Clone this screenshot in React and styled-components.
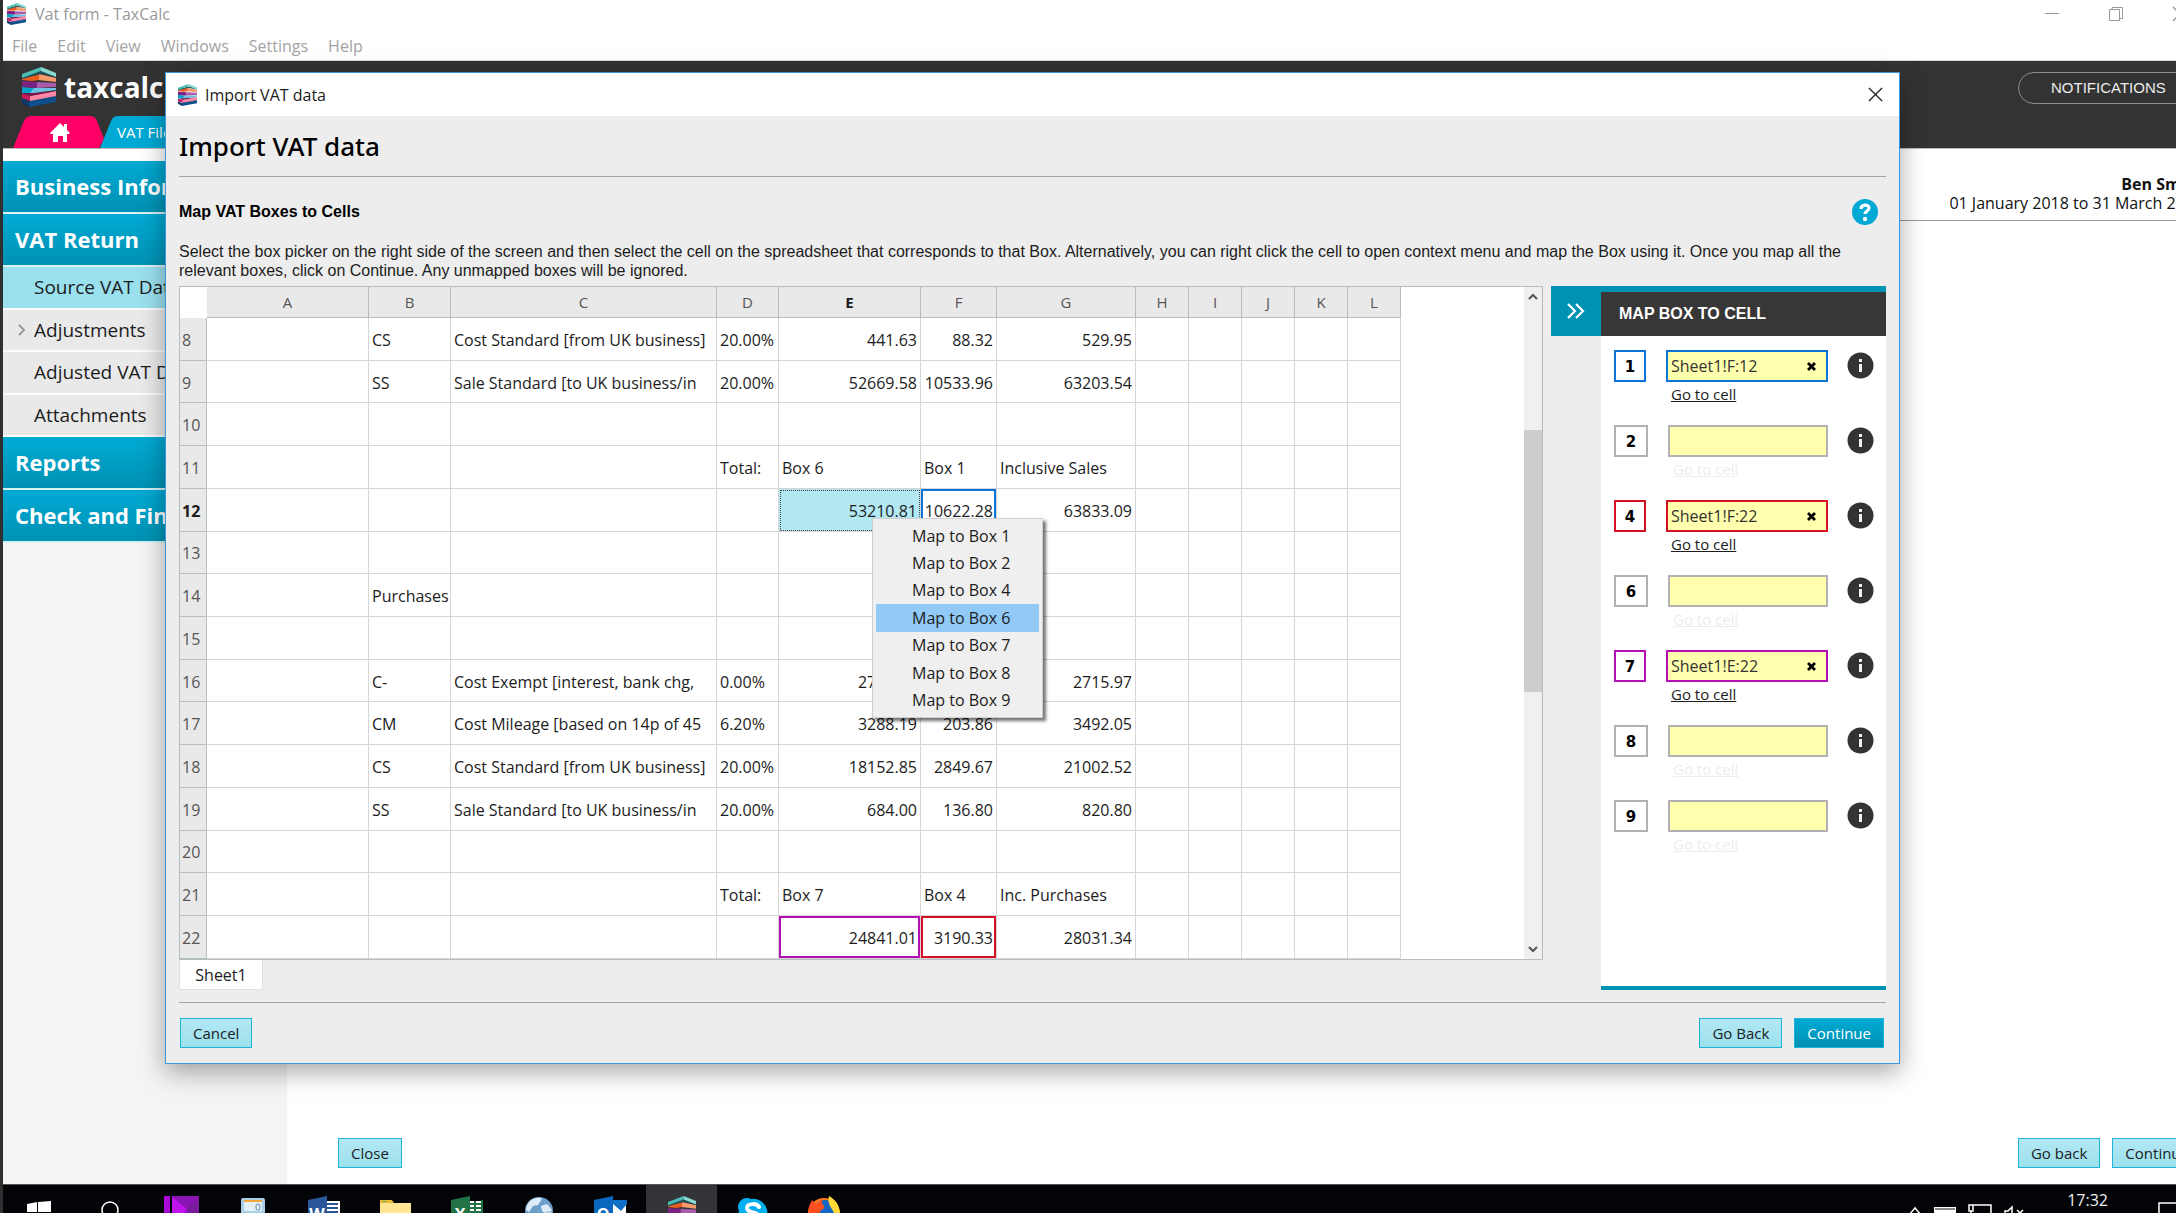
import React from 'react';
import styled, { createGlobalStyle, css } from 'styled-components';

const ui = '"Open Sans", "Noto Sans", sans-serif';
const arial = '"Liberation Sans", Arial, sans-serif';

const GlobalStyle = createGlobalStyle`
  *, *::before, *::after { box-sizing: border-box; }
  body { margin: 0; background: #2f2f2f; color: #1c1c1c; font: 16px/20px ${ui}; overflow: hidden; }
  button, input { font: inherit; color: inherit; margin: 0; }
  h1, h2, p, ul { margin: 0; padding: 0; }
  svg { display: block; flex: none; }
`;

const Desktop = styled.div`
  position: relative;
  height: 100vh;
  padding-left: 3px;
  display: flex;
  flex-direction: column;
  overflow: hidden;
`;

/* Main application window: runs past the right edge of the screen */
const Window = styled.div`
  flex: 1;
  min-height: 0;
  width: calc(100% + 40px);
  display: flex;
  flex-direction: column;
  background: #fff;
`;

const TitleBar = styled.header`
  height: 28px;
  display: flex;
  align-items: center;
  gap: 9px;
  padding: 0 28px 0 4px;
  color: #999;
`;

const WindowButtons = styled.div`
  margin-left: auto;
  display: flex;
  gap: 48px;
`;

const IconButton = styled.button`
  flex: none;
  display: flex;
  align-items: center;
  justify-content: center;
  padding: 0;
  border: 0;
  background: none;
  color: ${p => p.$color || '#999'};
`;

const MenuBar = styled.nav`
  height: 33px;
  display: flex;
  align-items: center;
  gap: 20px;
  padding: 4px 9px 0;
  border-bottom: 1px solid #d5dbd8;
`;

const MenuButton = styled.button`
  padding: 0;
  border: 0;
  background: none;
  color: #a3a3a3;
`;

const Brand = styled.div`
  height: 88px;
  display: flex;
  justify-content: space-between;
  background: #333;
  border-bottom: 1px solid #bbb;
`;

const BrandLeft = styled.div`
  display: flex;
  flex-direction: column;
  justify-content: space-between;
`;

const Logo = styled.div`
  display: flex;
  align-items: center;
  gap: 8px;
  height: 52px;
  padding-left: 19px;
  color: #fff;
  font: 700 28px/36px ${ui};
`;

const Tabs = styled.nav`
  display: flex;
  padding-left: 10px;
`;

const Tab = styled.button`
  position: relative;
  width: ${p => p.$width};
  height: 32px;
  margin-right: -5px;
  padding: 0 17px;
  border: 0;
  background: none;
  color: #fff;
  font-size: 15px;
  text-align: left;
  & > svg:first-child { position: absolute; inset: 0; }
  & > span { position: relative; }
`;

const HomeIcon = styled.svg`
  position: relative;
  margin: 0 18px 0 auto;
`;

const Notifications = styled.button`
  align-self: flex-start;
  height: 32px;
  min-width: 182px;
  margin: 11px 16px 0 0;
  padding: 0 32px;
  border: 1px solid #8c8c8c;
  border-radius: 16px;
  background: #333;
  color: #ececec;
  font: 15px/20px ${arial};
  text-align: left;
`;

const Workspace = styled.div`
  flex: 1;
  min-height: 0;
  display: flex;
`;

const Sidebar = styled.nav`
  width: 284px;
  padding-top: 12px;
  background: linear-gradient(#fff 12px, #f4f4f4 12px);
`;

const Section = styled.button`
  display: block;
  width: 100%;
  height: 53px;
  padding: 0 12px 2px;
  border: 0;
  border-bottom: 2px solid #d8f1f7;
  background: linear-gradient(#00aad4, #0091b3);
  color: #fff;
  font-weight: 700;
  font-size: 22px;
  text-align: left;
`;

const SubList = styled.ul`
  height: 170px;
  display: flex;
  flex-direction: column;
  list-style: none;
`;

const SubItem = styled.li`
  flex: 1;
  display: flex;
  align-items: center;
  gap: 8px;
  padding-left: 15px;
  border-bottom: 2px solid #fbfbfb;
  background: ${p => (p.$current ? '#9be0ee' : '#e9e9e9')};
  font-size: 19px;
  & > a { color: #1c1c1c; text-decoration: none; }
`;

const Content = styled.main`
  flex: 1;
  display: flex;
  flex-direction: column;
  justify-content: space-between;
`;

const Client = styled.div`
  padding: 26px 13px 7px;
  border-bottom: 1px solid #999;
  color: #111;
  text-align: right;
  line-height: 19px;
`;

const ContentActions = styled.div`
  display: flex;
  gap: 12px;
  padding: 0 14px 16px 51px;
`;

const Button = styled.button`
  height: 30px;
  padding: 0 12px;
  border: 1px solid #1cb4d8;
  background: ${p => (p.$primary ? 'linear-gradient(#00aad4, #0091b3)' : 'linear-gradient(#b3e8f3, #9be0ee)')};
  color: ${p => (p.$primary ? '#fff' : '#1c1c1c')};
  font-size: 15px;
  &:first-child { margin-right: auto; }
`;

/* Import dialog */
const Dialog = styled.section`
  position: absolute;
  inset: 72px 276px 149px 165px;
  display: flex;
  flex-direction: column;
  border: 1px solid #3b96dc;
  background: #ededed;
  box-shadow: 0 8px 24px rgba(0, 0, 0, 0.35);
`;

const DialogBar = styled.header`
  height: 43px;
  display: flex;
  align-items: center;
  gap: 8px;
  padding: 0 16px 0 12px;
  background: #fff;
  & > button { margin-left: auto; }
`;

const DialogBody = styled.div`
  flex: 1;
  min-height: 0;
  display: flex;
  flex-direction: column;
  padding: 0 13px;
`;

const Heading = styled.h1`
  height: 61px;
  border-bottom: 1px solid #a5a5a5;
  color: #000;
  font: 500 26px/60px "Noto Sans", ${ui};
`;

const SubHeading = styled.div`
  display: flex;
  align-items: center;
  justify-content: space-between;
  height: 65px;
  padding: 5px 8px 0 0;
  & > h2 { font: 700 16px/20px ${arial}; color: #000; }
`;

const Intro = styled.p`
  margin-bottom: 6px;
  font: 16px/19px ${arial};
`;

const Work = styled.div`
  flex: 1;
  min-height: 0;
  display: flex;
  gap: 8px;
`;

const SheetArea = styled.div`
  flex: 1;
  min-width: 0;
  display: flex;
  flex-direction: column;
  align-items: flex-start;
`;

const SheetFrame = styled.div`
  flex: 1;
  min-height: 0;
  width: 100%;
  display: flex;
  justify-content: space-between;
  border: 1px solid #b4bdc0;
  background: #fff;
`;

const Sheet = styled.table`
  width: 1221px;
  height: 100%;
  table-layout: fixed;
  border-collapse: separate;
  border-spacing: 0;
`;

const HeadCell = styled.th`
  height: 31px;
  padding: 0;
  border-right: 1px solid #b4bdc0;
  border-bottom: 1px solid #b4bdc0;
  background: #e9e9e9;
  color: ${p => (p.$current ? '#1c1c1c' : '#555')};
  font-size: 15px;
  font-weight: ${p => (p.$current ? 700 : 400)};
`;

const Corner = styled.td`
  padding: 0;
`;

const RowHead = styled(HeadCell)`
  height: auto;
  padding: 2px 0 0 2px;
  font-size: 16px;
  text-align: left;
`;

const Cell = styled.td`
  position: relative;
  padding: 2px 3px 0;
  border-right: 1px solid #d6d6d6;
  border-bottom: 1px solid #d6d6d6;
  text-align: ${p => (p.$number ? 'right' : 'left')};
  white-space: nowrap;
  ${p => p.$mark && css`box-shadow: inset 0 0 0 2px ${p.$mark};`}
  ${p => p.$selected && css`
    background: #b3e8f2;
    background-clip: padding-box;
    outline: 1px dotted #444;
    outline-offset: -2px;
  `}
`;

const ContextMenu = styled.div`
  position: absolute;
  z-index: 2;
  top: 29px;
  left: 93px;
  width: 171px;
  height: 200px;
  display: flex;
  flex-direction: column;
  padding: 3px;
  border: 1px solid #cfcfcf;
  background: #efefef;
  box-shadow: 3px 3px 3px rgba(0, 0, 0, 0.55);
`;

const MenuItem = styled.button`
  flex: 1;
  padding: 0 0 0 36px;
  border: 0;
  background: ${p => (p.$active ? '#91c9f7' : 'transparent')};
  text-align: left;
`;

const ScrollBar = styled.div`
  width: 18px;
  display: flex;
  flex-direction: column;
  align-items: center;
  justify-content: space-between;
  padding: 6px 0;
  background: #f0f0f0;
`;

const ScrollTrack = styled.div`
  flex: 1;
  width: 100%;
  padding-top: 129px;
`;

const ScrollThumb = styled.div`
  height: 262px;
  background: #cdcdcd;
`;

const SheetTab = styled.button`
  height: 30px;
  width: 84px;
  border: 1px solid #e0e0e0;
  border-top: 0;
  background: #fff;
`;

const Panel = styled.aside`
  width: 335px;
  display: grid;
  grid-template: 50px 1fr / 50px minmax(0, 1fr);
`;

const Collapse = styled(IconButton)`
  background: #0092b3;
`;

const PanelTitle = styled.h2`
  padding: 0 18px;
  border-top: 6px solid #0092b3;
  background: #373737;
  color: #fff;
  font: 700 16px/44px ${arial};
`;

const PanelBody = styled.div`
  grid-column: 2;
  padding: 14px 12px 0 13px;
  border-bottom: 4px solid #0092b3;
  background: #fff;
`;

const BoxRow = styled.div`
  height: 75px;
  display: grid;
  grid-template-columns: 33px minmax(0, 1fr) 27px;
  column-gap: 19px;
  align-items: start;
`;

const BoxNumber = styled.label`
  width: ${p => (p.$mark ? '32px' : '34px')};
  height: 32px;
  border: 2px solid ${p => p.$mark || '#b1b1b1'};
  color: #000;
  font: 700 15px/30px "DejaVu Sans", sans-serif;
  text-align: center;
`;

const BoxTarget = styled.div`
  margin-left: ${p => (p.$mark ? '0' : '2px')};
`;

const Field = styled.div`
  height: 32px;
  display: flex;
  padding: 0 10px 0 3px;
  border: 2px solid ${p => p.$mark || '#b1b1b1'};
  background: #ffffae;
  & > input {
    flex: 1;
    min-width: 0;
    padding: 0;
    border: 0;
    outline: 0;
    background: none;
    color: #333;
  }
`;

const GoTo = styled.a`
  display: block;
  padding: 0 5px;
  color: ${p => (p.$mark ? '#1c1c1c' : '#ededed')};
  font-size: 15px;
  line-height: 24px;
`;

const InfoButton = styled(IconButton)`
  margin-top: 2px;
`;

const DialogActions = styled.footer`
  display: flex;
  gap: 12px;
  margin-top: 12px;
  padding: 15px 2px 15px 1px;
  border-top: 1px solid #a5a5a5;
`;

const TaskBar = styled.footer`
  flex: none;
  height: 29px;
  display: flex;
  justify-content: space-between;
  align-items: flex-start;
  border-top: 1px solid #555;
  background: #020408;
  overflow: hidden;
`;

const Apps = styled.div`
  width: 857px;
  height: 28px;
  display: flex;
`;

const TaskButton = styled.button`
  flex: 1;
  height: 28px;
  display: flex;
  justify-content: center;
  padding: 11px 0 0;
  border: 0;
  overflow: hidden;
  background: ${p => (p.$active ? '#323437' : 'none')};
`;

const Tray = styled.div`
  display: flex;
  color: #eee;
  & > time { margin: 5px 50px 0 41px; }
`;

const TrayIcons = styled.div`
  display: flex;
  gap: 12px;
`;

function Stack({ w, h }) {
  return (
    <svg width={w} height={h} viewBox="0 0 34 40" preserveAspectRatio="none" aria-hidden="true">
      <path fill="#0f4f8c" d="M7 35l27-5v5L7 40z" />
      <path fill="#0d3768" d="M0 31l7 4v5l-7-4z" />
      <path fill="#0a4b86" d="M7 33l27-7v4L7 36z" />
      <path fill="#ff87a5" d="M8 29l26-5v5L8 34z" />
      <path fill="#c4195f" d="M0 26l8 3v5l-8-3z" />
      <path fill="#7e1650" d="M3 26l31-2-26 5z" />
      <path fill="#6cc2e3" d="M10 21h24v2L12 26H0z" />
      <path fill="#00a3cc" d="M0 20l12 1-4 5H0z" />
      <path fill="#a95cab" d="M15 15l19 1v4l-19 1z" />
      <path fill="#7a2382" d="M0 14l15 1v6L0 20z" />
      <path fill="#f79a6b" d="M17 7l17 4v4l-18-2z" />
      <path fill="#ee5c1e" d="M0 11l17-4 0 6-7 1L0 13z" />
      <path fill="#1f4e55" d="M0 10l20-6 14 5v1L19 7 0 12z" />
      <path fill="#4bbdb4" d="M0 7L19 0v4L0 11z" />
      <path fill="#8bd8d0" d="M19 0l15 6v4L19 4z" />
    </svg>
  );
}

const Cross = ({ size }) => (
  <svg width={size} height={size} viewBox="0 0 16 16" fill="none" stroke="currentColor"><path d="M1 1l14 14M15 1L1 15" strokeWidth="1.4" /></svg>
);

const InfoIcon = () => (
  <svg width="27" height="27" viewBox="0 0 27 27">
    <circle cx="13.500" cy="13.500" r="13" fill="#333" />
    <path fill="#f2f2f2" d="M12 7h3v3h-3zM12 12h3v8h-3z" />
  </svg>
);

const Office = ({ color, dark, letter, kind }) => (
  <svg width="34" height="34" viewBox="0 0 34 34">
    <rect x="18" y="5" width="15" height="24" fill="#fff" />
    {kind === 'lines' && <path stroke={color} strokeWidth="2" d="M20 8h11M20 12h11M20 16h11M20 20h11" />}
    {kind === 'cells' && <path stroke={color} strokeWidth="2" d="M20 8h12M20 12h12M20 16h12M20 20h12M25 5v24M32 4v24" />}
    {kind === 'mail' && <path fill={color} d="M18 4h16v4H18zM20 8h14l-6 7z" />}
    <path fill={dark} d="M1 4l19-4v34L1 30z" />
    <text x="10" y="24" fill="#fff" fontFamily="Open Sans" fontWeight="700" fontSize="16" textAnchor="middle">{letter}</text>
  </svg>
);

const apps = [
  ['Start', <svg key="i" width="24" height="30" viewBox="0 0 24 30"><path fill="#fff" d="M0 8l10-2v10H0zM11 6l13-1v11H11zM0 17h10v9L0 25zM11 17h13v11l-13-1z" /></svg>],
  ['Search', <svg key="i" width="18" height="30" viewBox="0 0 18 30"><circle cx="9" cy="14" r="8" fill="none" stroke="#fff" strokeWidth="1.500" /></svg>],
  ['Media', <svg key="i" width="35" height="34" viewBox="0 0 35 34"><path fill="#a808d8" d="M0 0h6v34H0zM8 0h27v34H8z" /><path fill="#8a14b4" d="M8 0h27v7L22 13z" /><path fill="#c014ec" d="M8 1l15 12-15 21z" /><path fill="#7a1a9c" d="M35 2v32L22 13z" /></svg>],
  ['Calculator', <svg key="i" width="26" height="34" viewBox="0 0 26 34"><rect x="1" y="2" width="24" height="32" rx="2" fill="#a9cfe6" /><rect x="4" y="4" width="18" height="11" fill="#e4f0f8" /><path fill="#f0a63a" d="M4 4h18v2H4z" /><rect x="16" y="8" width="4" height="6" rx="2" fill="none" stroke="#6b8ca5" /></svg>],
  ['Word', <Office key="i" color="#2b579a" dark="#2b579a" letter="W" kind="lines" />],
  ['File Explorer', <svg key="i" width="31" height="34" viewBox="0 0 31 34"><path fill="#e8b933" d="M0 4h12l2 3h16v6H0z" /><path fill="#ffe594" d="M0 7h31v26H0z" /><path fill="#3fae7a" d="M3 5h3v1H3z" /></svg>],
  ['Excel', <Office key="i" color="#217346" dark="#217346" letter="X" kind="cells" />],
  ['Browser', <svg key="i" width="30" height="34" viewBox="0 0 30 34"><circle cx="15" cy="15" r="14" fill="#6d9fcb" /><path fill="#dcebf7" d="M6 5c5-4 10-4 12-2l-4 6-5 1-4 6-3-2c0-4 2-7 4-9zM17 10l6-2 5 6-5 5-5-4z" /><circle cx="24" cy="20" r="5" fill="#b8cfe2" /></svg>],
  ['Outlook', <Office key="i" color="#0f70c6" dark="#0a67bd" letter="O" kind="mail" />],
  ['TaxCalc', <Stack key="i" w={28} h={34} />],
  ['Skype', <svg key="i" width="34" height="34" viewBox="0 0 34 34"><path fill="#00aff0" d="M10 2a8 8 0 0 1 5 1 14 14 0 0 1 16 17 9 9 0 0 1-13 12A14 14 0 0 1 3 15 9 9 0 0 1 10 2z" /><path fill="none" stroke="#fff" strokeWidth="4" strokeLinecap="round" d="M23 11c-2-4-12-4-12 1 0 6 12 3 12 9 0 5-11 5-13 0" /></svg>],
  ['Firefox', <svg key="i" width="34" height="34" viewBox="0 0 34 34"><circle cx="17" cy="18" r="16" fill="#ff7a18" /><circle cx="18" cy="15" r="11" fill="#1665c4" /><path fill="#ff4f1e" d="M1 18C1 10 4 7 5 4l4 4 6-4 0 4c3 1 3 5-1 6l-4 8z" /><path fill="#ffd83a" d="M22 0c7 4 11 10 11 18l-3 8c-2-2-2-8-4-11-2-4-6-8-4-15z" /></svg>],
];

const widths = [27, 162, 82, 266, 62, 142, 76, 139, 53, 53, 53, 53, 53];
const letters = 'ABCDEFGHIJKL'.split('');
const rows = {
  8: { B: 'CS', C: 'Cost Standard [from UK business]', D: '20.00%', E: '441.63', F: '88.32', G: '529.95' },
  9: { B: 'SS', C: 'Sale Standard [to UK business/in', D: '20.00%', E: '52669.58', F: '10533.96', G: '63203.54' },
  10: {},
  11: { D: 'Total:', E: 'Box 6', F: 'Box 1', G: 'Inclusive Sales' },
  12: { E: '53210.81', F: '10622.28', G: '63833.09' },
  13: {},
  14: { B: 'Purchases' },
  15: {},
  16: { B: 'C-', C: 'Cost Exempt [interest, bank chg,', D: '0.00%', E: '2715.97', G: '2715.97' },
  17: { B: 'CM', C: 'Cost Mileage [based on 14p of 45', D: '6.20%', E: '3288.19', F: '203.86', G: '3492.05' },
  18: { B: 'CS', C: 'Cost Standard [from UK business]', D: '20.00%', E: '18152.85', F: '2849.67', G: '21002.52' },
  19: { B: 'SS', C: 'Sale Standard [to UK business/in', D: '20.00%', E: '684.00', F: '136.80', G: '820.80' },
  20: {},
  21: { D: 'Total:', E: 'Box 7', F: 'Box 4', G: 'Inc. Purchases' },
  22: { E: '24841.01', F: '3190.33', G: '28031.34' },
};
const marks = { F12: '#0b74d8', E22: '#b40fb4', F22: '#d40f26' };
const boxes = [
  { n: 1, ref: 'Sheet1!F:12', mark: '#0b74d8' },
  { n: 2 },
  { n: 4, ref: 'Sheet1!F:22', mark: '#d40f26' },
  { n: 6 },
  { n: 7, ref: 'Sheet1!E:22', mark: '#b40fb4' },
  { n: 8 },
  { n: 9 },
];

function Spreadsheet() {
  return (
    <Sheet>
      <colgroup>{widths.map((w, i) => <col key={i} width={w} />)}</colgroup>
      <thead>
        <tr>
          <Corner />
          {letters.map(l => <HeadCell key={l} scope="col" $current={l === 'E'}>{l}</HeadCell>)}
        </tr>
      </thead>
      <tbody>
        {Object.entries(rows).map(([n, row]) => (
          <tr key={n}>
            <RowHead scope="row" $current={n === '12'}>{n}</RowHead>
            {letters.map(l => (
              <Cell
                key={l}
                $number={l >= 'E' && /^\d/.test(row[l] || '')}
                $mark={marks[l + n]}
                $selected={l + n === 'E12'}
              >
                {row[l]}
                {l + n === 'E12' && (
                  <ContextMenu role="menu">
                    {[1, 2, 4, 6, 7, 8, 9].map(b => (
                      <MenuItem key={b} role="menuitem" $active={b === 6}>Map to Box {b}</MenuItem>
                    ))}
                  </ContextMenu>
                )}
              </Cell>
            ))}
          </tr>
        ))}
      </tbody>
    </Sheet>
  );
}

function MapPanel() {
  return (
    <Panel>
      <Collapse aria-label="Collapse panel" $color="#fff">
        <svg width="18" height="16" viewBox="0 0 18 16" fill="none" stroke="currentColor" strokeWidth="2.200"><path d="M1 1l7 7-7 7M9 1l7 7-7 7" /></svg>
      </Collapse>
      <PanelTitle>MAP BOX TO CELL</PanelTitle>
      <PanelBody>
        {boxes.map(({ n, ref, mark }) => (
          <BoxRow key={n}>
            <BoxNumber htmlFor={`box-${n}`} $mark={mark}>{n}</BoxNumber>
            <BoxTarget $mark={mark}>
              <Field $mark={mark}>
                <input id={`box-${n}`} defaultValue={ref || ''} />
                {ref && (
                  <IconButton aria-label={`Clear box ${n}`} $color="#000">
                    <svg width="9" height="9" viewBox="0 0 9 9" stroke="currentColor" strokeWidth="2.800"><path d="M1 1l7 7M8 1L1 8" /></svg>
                  </IconButton>
                )}
              </Field>
              <GoTo href={`#box-${n}`} $mark={mark}>Go to cell</GoTo>
            </BoxTarget>
            <InfoButton aria-label={`About box ${n}`}><InfoIcon /></InfoButton>
          </BoxRow>
        ))}
      </PanelBody>
    </Panel>
  );
}

function ImportDialog() {
  return (
    <Dialog role="dialog" aria-label="Import VAT data">
      <DialogBar>
        <Stack w={19} h={22} />
        <span>Import VAT data</span>
        <IconButton aria-label="Close dialog" $color="#222"><Cross size={15} /></IconButton>
      </DialogBar>
      <DialogBody>
        <Heading>Import VAT data</Heading>
        <SubHeading>
          <h2>Map VAT Boxes to Cells</h2>
          <IconButton aria-label="Help">
            <svg width="26" height="26" viewBox="0 0 26 26">
              <circle cx="13" cy="13" r="13" fill="#00a9d4" />
              <path d="M9 10c0-5 8-5 8-1 0 3-4 3-4 6" fill="none" stroke="#fff" strokeWidth="3.200" />
              <circle cx="13" cy="20" r="2.200" fill="#fff" />
            </svg>
          </IconButton>
        </SubHeading>
        <Intro>
          Select the box picker on the right side of the screen and then select the cell on the spreadsheet that
          corresponds to that Box. Alternatively, you can right click the cell to open context menu and map the Box
          using it. Once you map all the relevant boxes, click on Continue. Any unmapped boxes will be ignored.
        </Intro>
        <Work>
          <SheetArea>
            <SheetFrame>
              <Spreadsheet />
              <ScrollBar>
                <svg width="10" height="8" viewBox="0 0 10 8" fill="none" stroke="#555" strokeWidth="2"><path d="M1 6l4-4 4 4" /></svg>
                <ScrollTrack><ScrollThumb /></ScrollTrack>
                <svg width="10" height="8" viewBox="0 0 10 8" fill="none" stroke="#555" strokeWidth="2"><path d="M1 2l4 4 4-4" /></svg>
              </ScrollBar>
            </SheetFrame>
            <SheetTab>Sheet1</SheetTab>
          </SheetArea>
          <MapPanel />
        </Work>
        <DialogActions>
          <Button>Cancel</Button>
          <Button>Go Back</Button>
          <Button $primary>Continue</Button>
        </DialogActions>
      </DialogBody>
    </Dialog>
  );
}

export default function App() {
  return (
    <Desktop>
      <GlobalStyle />
      <Window>
        <TitleBar>
          <Stack w={19} h={22} />
          <span>Vat form - TaxCalc</span>
          <WindowButtons>
            <IconButton aria-label="Minimise"><svg width="16" height="16" viewBox="0 0 16 16" stroke="currentColor"><path d="M1 7.500h14" /></svg></IconButton>
            <IconButton aria-label="Restore"><svg width="16" height="16" viewBox="0 0 16 16" fill="none" stroke="currentColor"><path d="M1.500 3.500h10v11h-10zM4 3V1.500h10.500v11H12" /></svg></IconButton>
            <IconButton aria-label="Close window"><Cross size={16} /></IconButton>
          </WindowButtons>
        </TitleBar>
        <MenuBar>
          {['File', 'Edit', 'View', 'Windows', 'Settings', 'Help'].map(m => <MenuButton key={m}>{m}</MenuButton>)}
        </MenuBar>
        <Brand>
          <BrandLeft>
            <Logo><Stack w={34} h={40} /><span>taxcalc</span></Logo>
            <Tabs>
              <Tab $width="92px" aria-label="Home">
                <svg width="92" height="32" viewBox="0 0 92 32"><path fill="#ff0066" d="M0 32L11 5q2-5 8-5h58q5 0 7 5l7 18-5 9z" /></svg>
                <HomeIcon width="20" height="19" viewBox="0 0 20 19"><path fill="#fff" d="M10 0l4 4V1h3v6l3 3-1 1h-2v8h-4v-6H8v6H3v-8H1l-1-1z" /></HomeIcon>
              </Tab>
              <Tab $width="170px">
                <svg width="170" height="32" viewBox="0 0 170 32"><path fill="#00a9d4" d="M0 32l11-27q2-5 7-5h134q6 0 8 5l10 27z" /></svg>
                <span>VAT Filer</span>
              </Tab>
            </Tabs>
          </BrandLeft>
          <Notifications>NOTIFICATIONS</Notifications>
        </Brand>
        <Workspace>
          <Sidebar>
            <Section>Business Information</Section>
            <Section>VAT Return</Section>
            <SubList>
              {['Source VAT Data', 'Adjustments', 'Adjusted VAT Data', 'Attachments'].map((t, i) => (
                <SubItem key={t} $current={i === 0}>
                  <svg width="8" height="12" viewBox="0 0 8 12" fill="none" stroke={i === 1 ? '#999' : 'none'} strokeWidth="2"><path d="M1 1l5 5-5 5" /></svg>
                  <a href="#section">{t}</a>
                </SubItem>
              ))}
            </SubList>
            <Section>Reports</Section>
            <Section>Check and Finish</Section>
          </Sidebar>
          <Content>
            <Client>
              <strong>Ben Smith</strong>
              <div>01 January 2018 to 31 March 2018</div>
            </Client>
            <ContentActions>
              <Button>Close</Button>
              <Button>Go back</Button>
              <Button>Continue</Button>
            </ContentActions>
          </Content>
        </Workspace>
      </Window>
      <ImportDialog />
      <TaskBar>
        <Apps>
          {apps.map(([name, icon]) => <TaskButton key={name} aria-label={name} $active={name === 'TaxCalc'}>{icon}</TaskButton>)}
        </Apps>
        <Tray>
          <TrayIcons>
            <svg width="14" height="28" viewBox="0 0 14 28" fill="none" stroke="#fff" strokeWidth="1.500"><path d="M1 30l6-7 6 7" /></svg>
            <svg width="22" height="28" viewBox="0 0 22 28"><path fill="#fff" d="M0 22h22v6H0z" /><path stroke="#888" strokeWidth="2" d="M1 24h20" /></svg>
            <svg width="24" height="28" viewBox="0 0 24 28" fill="none" stroke="#fff" strokeWidth="1.500"><path d="M5 20h18v12M1 20h4v6H1zM3 26v3" /></svg>
            <svg width="22" height="28" viewBox="0 0 22 28" fill="none" stroke="#fff" strokeWidth="1.500"><path d="M1 30v-4h3l4-4v8M13 25l6 6M19 25l-6 6" /></svg>
          </TrayIcons>
          <time>17:32</time>
          <svg width="18" height="28" viewBox="0 0 18 28" fill="none" stroke="#fff" strokeWidth="1.500"><path d="M20 18H1v12" /></svg>
        </Tray>
      </TaskBar>
    </Desktop>
  );
}
